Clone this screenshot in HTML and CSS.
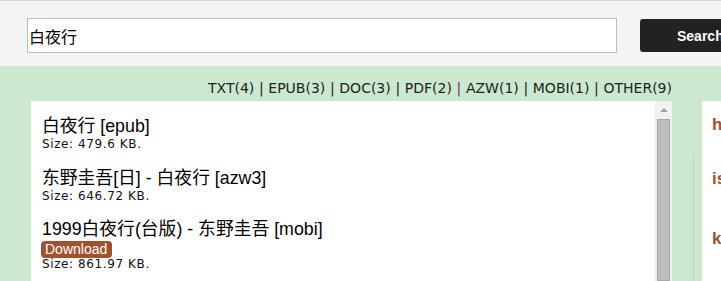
FILE: index.html
```html
<!DOCTYPE html>
<html lang="zh">
<head>
<meta charset="utf-8">
<title>白夜行</title>
<link rel="stylesheet" href="styles.css">
</head>
<body>
<div class="topbar">
  <input class="search-input" type="text" value="白夜行">
  <button class="search-btn">Search</button>
</div>
<div class="main">
  <div class="left">
    <div class="filters">
      <a>TXT(4)</a> <span class="sep">|</span> <a>EPUB(3)</a> <span class="sep">|</span> <a>DOC(3)</a> <span class="sep">|</span> <a>PDF(2)</a> <span class="sep visited">|</span> <a>AZW(1)</a> <span class="sep">|</span> <a>MOBI(1)</a> <span class="sep">|</span> <a>OTHER(9)</a>
    </div>
    <div class="results">
      <div class="list">
        <div class="item">
          <div class="title">白夜行 [epub]</div>
          <div class="size">Size: 479.6 KB.</div>
        </div>
        <div class="item">
          <div class="title">东野圭吾[日] - 白夜行 [azw3]</div>
          <div class="size">Size: 646.72 KB.</div>
        </div>
        <div class="item">
          <div class="title">1999白夜行(台版) - 东野圭吾 [mobi]</div>
          <div class="dl-row"><span class="download">Download</span></div>
          <div class="size">Size: 861.97 KB.</div>
        </div>
      </div>
      <div class="scrollbar">
        <div class="arrow-box"><span class="arrow"></span></div>
        <div class="thumb"></div>
      </div>
    </div>
  </div>
  <div class="gutter"><div class="rule"></div></div>
  <div class="side">
    <div class="side-item s1">h</div>
    <div class="side-item s2">is</div>
    <div class="side-item s3">k</div>
  </div>
</div>
</body>
</html>
```
FILE: styles.css
```css
* { box-sizing: border-box; }
html, body {
  margin: 0;
  padding: 0;
  height: 281px;
  overflow: hidden;
}
body {
  font-family: "Liberation Sans", "Noto Sans CJK SC", sans-serif;
  background: #cce8cf;
  display: flex;
  flex-direction: column;
}
.topbar {
  height: 66px;
  background: #f4f4f4;
  border-top: 1px solid #d8d8d8;
  display: flex;
  align-items: flex-start;
  padding: 17px 0 0 27px;
  gap: 23px;
  flex: none;
}
.search-input {
  width: 590px;
  height: 35px;
  margin: 0;
  border: 1px solid #bdbdbd;
  background: #fff;
  padding: 0 1px;
  font-family: "Noto Sans CJK SC", sans-serif;
  font-size: 16px;
  color: #000;
  outline: none;
  flex: none;
}
.search-btn {
  margin-top: 1px;
  width: 120px;
  height: 33px;
  border: none;
  border-radius: 3px;
  background: #222;
  color: #fff;
  font-family: "Liberation Sans", sans-serif;
  font-weight: bold;
  font-size: 14px;
  text-align: left;
  padding: 0 0 0 37px;
  flex: none;
}
.main {
  flex: 1;
  display: flex;
  min-height: 0;
}
.left {
  width: 641px;
  margin-left: 31px;
  display: flex;
  flex-direction: column;
  flex: none;
}
.filters {
  height: 35px;
  text-align: right;
  font-family: "DejaVu Sans", sans-serif;
  font-size: 14px;
  line-height: 20px;
  padding-top: 12px;
  color: #222;
  white-space: nowrap;
  word-spacing: 0.2px;
}
.filters a { color: #222; }
.sep { color: #222; }
.sep.visited { color: #7b1f70; }
.results {
  flex: 1;
  background: #fff;
  display: flex;
  min-height: 0;
}
.list {
  flex: 1;
  padding: 15px 0 0 11px;
}
.item { margin-bottom: 16.5px; }
.title {
  font-size: 17.8px;
  line-height: 21px;
  color: #000;
  white-space: nowrap;
}
.size {
  font-family: "DejaVu Sans", sans-serif;
  font-size: 12px;
  letter-spacing: 0.6px;
  line-height: 14px;
  color: #111;
}
.dl-row {
  height: 17px;
}
.download {
  display: inline-block;
  margin-left: -1px;
  background: #a0522d;
  color: #fff;
  font-size: 14px;
  line-height: 17px;
  padding: 0 5px 0 4px;
  border-radius: 4px;
}
.scrollbar {
  width: 17px;
  background: #f1f1f1;
  flex: none;
  display: flex;
  flex-direction: column;
  align-items: center;
}
.arrow-box {
  height: 18px;
  width: 17px;
  display: flex;
  align-items: center;
  justify-content: center;
}
.arrow {
  width: 0;
  height: 0;
  border-left: 4px solid transparent;
  border-right: 4px solid transparent;
  border-bottom: 4px solid #a3a3a3;
}
.thumb {
  width: 13px;
  flex: 1;
  background: #bdbdbd;
  border: 1px solid #a8a8a8;
}
.gutter {
  width: 30px;
  flex: none;
  padding: 90px 0 0 21px;
}
.rule {
  width: 1px;
  height: 100%;
  background: #b7d5ba;
}
.side {
  flex: 1;
  margin-top: 35px;
  background: #fff;
  padding: 14px 0 0 10px;
  overflow: hidden;
}
.side-item {
  font-family: "Liberation Sans", sans-serif;
  font-weight: bold;
  font-size: 17px;
  line-height: 20px;
  color: #a0522d;
}
.s2 { margin-top: 34px; }
.s3 { margin-top: 40px; }
```
